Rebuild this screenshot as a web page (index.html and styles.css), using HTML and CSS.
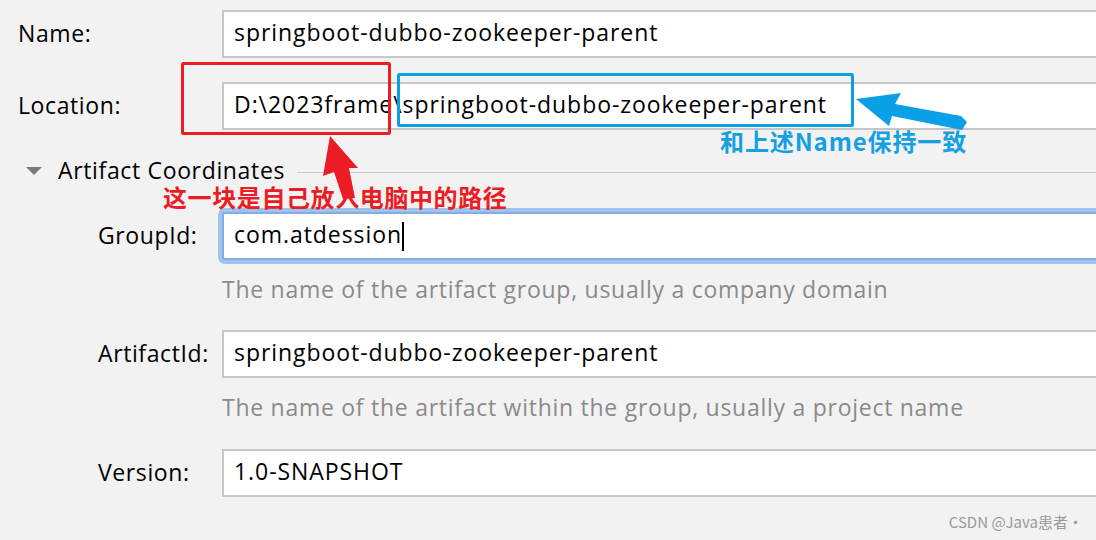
FILE: index.html
```html
<!DOCTYPE html>
<html lang="zh-CN">
<head>
    <meta charset="UTF-8">
    <title>New Project</title>
    <link rel="stylesheet" href="styles.css">
</head>
<body>

<div class="form">
    <div class="field">
        <label>Name:</label>
        <div class="input">springboot-dubbo-zookeeper-parent</div>
    </div>

    <div class="field location">
        <label>Location:</label>
        <div class="input">D:\2023frame\springboot-dubbo-zookeeper-parent</div>
    </div>

    <div class="section">
        <span class="arrow-down"></span>
        <span class="section-title">Artifact Coordinates</span>
        <span class="section-line"></span>
    </div>

    <div class="field sub group">
        <label>GroupId:</label>
        <div class="input focused">com.atdession<span class="caret"></span></div>
    </div>
    <div class="hint">The name of the artifact group, usually a company domain</div>

    <div class="field sub artifact">
        <label>ArtifactId:</label>
        <div class="input">springboot-dubbo-zookeeper-parent</div>
    </div>
    <div class="hint">The name of the artifact within the group, usually a project name</div>

    <div class="field sub version">
        <label>Version:</label>
        <div class="input">1.0-SNAPSHOT</div>
    </div>
</div>

<!-- annotations drawn on top of the screenshot -->
<svg class="marks" width="1096" height="540" viewBox="0 0 1096 540">
    <rect x="182.5" y="63.5" width="207" height="70" fill="none" stroke="#ec1c24" stroke-width="3" rx="1"/>
    <rect x="398.5" y="74.5" width="454" height="51" fill="none" stroke="#0aa0e6" stroke-width="3" rx="1"/>
    <polygon points="330,136 358,168 349,168 355,198 343,199 334,172 323,176" fill="#ec1c24"/>
    <polygon points="856,99 901,93 895,104 961,116 967,122 962,130 892,116 889,126" fill="#0aa0e6"/>
</svg>
<span class="note note-red">这一块是自己放入电脑中的路径</span>
<span class="note note-blue">和上述Name保持一致</span>
<span class="watermark">CSDN @Java患者·</span>

</body>
</html>
```

FILE: styles.css
```css
body {
    font-family: 'Open Sans', 'Noto Sans', sans-serif;
    background: #f2f2f2;
    margin: 0;
    padding: 0;
    width: 1096px;
    height: 540px;
    overflow: hidden;
    position: relative;
    color: #000;
}

.form {
    padding-top: 10px;
}

.field {
    display: grid;
    grid-template-columns: 222px 1fr;
    align-items: center;
    height: 48px;
}

.field label {
    font-size: 23px;
    letter-spacing: 0.6px;
    padding-left: 18px;
    line-height: 30px;
    margin-top: -3px;
}

.field.sub label {
    padding-left: 98px;
}

.input {
    box-sizing: border-box;
    width: 900px;
    height: 48px;
    background: #fff;
    border: 2px solid #c6c6c6;
    font-size: 23px;
    letter-spacing: 0.94px;
    line-height: 40px;
    padding-left: 10px;
    white-space: nowrap;
}

.input.focused {
    border-color: #87abdc;
    border-radius: 3px;
    box-shadow: 0 0 0 4px #9dc3ef;
}

.caret {
    display: inline-block;
    width: 2px;
    height: 29px;
    background: #000;
    vertical-align: middle;
    margin-left: 0;
}

.location {
    margin-top: 24px;
}

.section {
    display: flex;
    align-items: center;
    height: 30px;
    margin-top: 26px;
    padding-left: 26px;
}

.arrow-down {
    width: 0;
    height: 0;
    border-left: 8px solid transparent;
    border-right: 8px solid transparent;
    border-top: 8px solid #7a7a7a;
}

.section-title {
    font-size: 23px;
    letter-spacing: 0.65px;
    line-height: 22px;
    margin-left: 16px;
    margin-top: -2px;
}

.section-line {
    flex: 1;
    height: 1px;
    background: #c8c8c8;
    margin-left: 12px;
    margin-top: 3px;
}

.group {
    margin-top: 26px;
}

.hint {
    font-size: 23px;
    letter-spacing: 0.73px;
    color: #8a8a8a;
    padding-left: 222px;
    height: 30px;
    line-height: 28px;
    margin-top: 15px;
}

.artifact {
    margin-top: 25px;
}

.version {
    margin-top: 26px;
}

.marks {
    position: absolute;
    left: 0;
    top: 0;
}

.note {
    position: absolute;
    font-family: 'Noto Sans CJK SC', sans-serif;
    font-weight: bold;
    white-space: nowrap;
}

.note-red {
    left: 163px;
    top: 185px;
    font-size: 24px;
    letter-spacing: 0.6px;
    line-height: 24px;
    color: #ec1c24;
}

.note-blue {
    left: 720px;
    top: 129px;
    font-size: 24px;
    letter-spacing: 0.9px;
    line-height: 24px;
    color: #14a0e3;
}

.watermark {
    position: absolute;
    right: 13px;
    top: 511px;
    font-family: 'Noto Sans CJK SC', sans-serif;
    font-size: 15px;
    color: #9a9a9a;
}
```
